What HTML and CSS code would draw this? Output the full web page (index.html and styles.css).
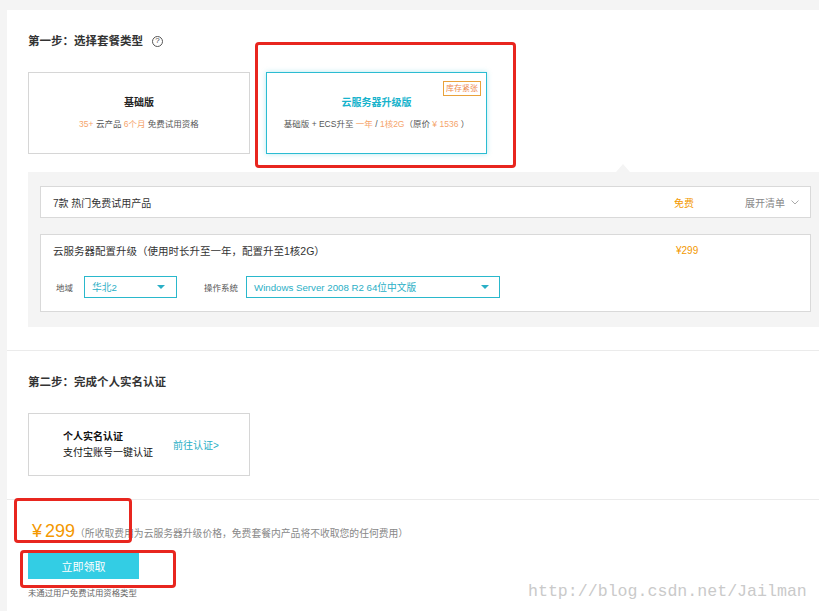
FILE: index.html
```html
<!DOCTYPE html>
<html lang="zh-CN">
<head>
<meta charset="utf-8">
<title>免费套餐</title>
<link rel="stylesheet" href="styles.css">
</head>
<body>
<div class="panel">
  <section class="step step-one">
    <h2 class="step-title">第一步：选择套餐类型 <span class="help">?</span></h2>
    <div class="cards">
      <div class="card">
        <div class="card-name">基础版</div>
        <div class="card-desc"><span class="hl">35+</span> 云产品 <span class="hl">6个月</span> 免费试用资格</div>
      </div>
      <div class="card card-active">
        <span class="badge">库存紧张</span>
        <div class="card-name teal">云服务器升级版</div>
        <div class="card-desc">基础版 + ECS升至 <span class="hl">一年</span> / <span class="hl">1核2G</span>（原价 <span class="hl">¥ 1536</span> ）</div>
      </div>
    </div>
    <div class="detail">
      <div class="box box-row">
        <div class="col-name">7款 热门免费试用产品</div>
        <div class="col-price">免费</div>
        <div class="col-toggle">展开清单 <svg class="chev" width="8" height="5" viewBox="0 0 8 5"><path d="M0.5 0.5 L4 4 L7.5 0.5" fill="none" stroke="#aaa" stroke-width="1"/></svg></div>
      </div>
      <div class="box box-config">
        <div class="config-head">
          <div class="col-name config-title">云服务器配置升级（使用时长升至一年，配置升至1核2G）</div>
          <div class="col-price price-sm">¥299</div>
          <div class="col-toggle"></div>
        </div>
        <div class="config-row">
          <span class="label">地域</span>
          <div class="select sel-region"><span>华北2</span><i class="caret"></i></div>
          <span class="label label-os">操作系统</span>
          <div class="select sel-os"><span>Windows Server 2008 R2 64位中文版</span><i class="caret"></i></div>
        </div>
      </div>
    </div>
  </section>
  <section class="step step-two">
    <h2 class="step-title">第二步：完成个人实名认证</h2>
    <div class="card auth-card">
      <div class="auth-text">
        <div class="auth-name">个人实名认证</div>
        <div class="auth-sub">支付宝账号一键认证</div>
      </div>
      <span class="auth-link">前往认证&gt;</span>
    </div>
  </section>
  <section class="step step-three">
    <div class="total"><span class="total-price"><span class="yen">¥</span>299</span><span class="total-note">（所收取费用为云服务器升级价格，免费套餐内产品将不收取您的任何费用）</span></div>
    <button class="btn">立即领取</button>
    <div class="foot-note">未通过用户免费试用资格类型</div>
  </section>
</div>
<div class="mark mark-a"></div>
<div class="mark mark-b"></div>
<div class="mark mark-c"></div>
<div class="watermark">http://blog.csdn.net/Jailman</div>
</body>
</html>
```
FILE: styles.css
```css
* { box-sizing: border-box; }
html, body { margin: 0; padding: 0; }
body {
  background: #f4f4f4;
  font-family: "Liberation Sans", "Noto Sans CJK SC", sans-serif;
  color: #333;
  width: 819px;
  height: 611px;
  overflow: hidden;
  position: relative;
}
.panel {
  margin: 10px 0 0 7px;
  background: #fff;
  height: 601px;
}
.step { padding-left: 21px; }
.step-one { padding-top: 24px; padding-bottom: 23px; }
.step-title {
  margin: 0;
  font-size: 11.5px;
  line-height: 14px;
  font-weight: bold;
  color: #333;
  display: flex;
  align-items: center;
}
.help {
  display: inline-flex;
  align-items: center;
  justify-content: center;
  width: 11px;
  height: 11px;
  border: 1px solid #555;
  border-radius: 50%;
  font-size: 8px;
  line-height: 1;
  font-weight: normal;
  margin-left: 9px;
  color: #444;
}
.cards { display: flex; gap: 16px; margin-top: 24px; }
.card {
  width: 222px;
  height: 82px;
  border: 1px solid #d6d6d6;
  background: #fff;
  display: flex;
  flex-direction: column;
  align-items: center;
  justify-content: center;
  position: relative;
}
.card-active {
  width: 221px;
  border-color: #2bbcd2;
  box-shadow: 0 0 5px rgba(43, 188, 210, 0.35);
}
.card-name { font-size: 10px; font-weight: bold; line-height: 14px; color: #222; }
.card-name.teal { color: #17b3cc; }
.card-desc { font-size: 8.5px; line-height: 12px; color: #555; margin-top: 8px; white-space: nowrap; }
.hl { color: #f5a46b; }
.badge {
  position: absolute;
  top: 8px;
  right: 5px;
  border: 1px solid #e9a23b;
  color: #ee8a4d;
  font-size: 8px;
  line-height: 13px;
  padding: 0 2px;
}
.detail {
  margin-top: 18px;
  background: #f4f4f4;
  padding: 14px 8px 15px 12px;
  position: relative;
}
.detail::before {
  content: "";
  position: absolute;
  top: -8px;
  left: 588px;
  border-left: 7px solid transparent;
  border-right: 7px solid transparent;
  border-bottom: 8px solid #f4f4f4;
}
.box { background: #fff; border: 1px solid #d9d9d9; }
.box-row { height: 32px; display: flex; align-items: center; padding: 0 11px 0 12px; font-size: 10px; }
.col-name { flex: 1; color: #333; white-space: nowrap; }
.col-price { width: 71px; color: #f39800; font-size: 10px; }
.col-toggle { width: 54px; color: #888; font-size: 10px; display: flex; align-items: center; white-space: nowrap; }
.chev { margin-left: 6px; }
.box-config { margin-top: 16px; height: 78px; padding: 8px 11px 0 12px; }
.config-head { display: flex; align-items: center; height: 14px; font-size: 10px; }
.config-title { font-size: 10.5px; }
.price-sm { font-size: 10px; padding-left: 2px; }
.config-row { display: flex; align-items: center; margin-top: 19px; padding-left: 3px; }
.label { font-size: 8.5px; color: #555; }
.label-os { margin-left: 27px; }
.select {
  height: 22px;
  border: 1px solid #2ab8cc;
  display: flex;
  align-items: center;
  justify-content: space-between;
  padding: 0 10px 0 7px;
  color: #2aafc6;
  font-size: 9.7px;
  white-space: nowrap;
  margin-left: 11px;
}
.sel-region { width: 93px; padding-right: 11px; }
.sel-os { width: 254px; margin-left: 8px; }
.caret {
  width: 0; height: 0;
  border-left: 4px solid transparent;
  border-right: 4px solid transparent;
  border-top: 4px solid #2aafc6;
}
.step-two { border-top: 1px solid #ebebeb; padding-top: 24px; padding-bottom: 23px; }
.auth-card {
  margin-top: 24px;
  height: 63px;
  flex-direction: row;
  justify-content: flex-start;
  padding-left: 34px;
}
.auth-text { font-size: 10px; line-height: 16px; color: #111; }
.auth-name { font-weight: bold; }
.auth-link { margin-left: 20px; font-size: 10px; color: #2aafc6; }
.step-three { border-top: 1px solid #ebebeb; padding-top: 19px; }
.total { display: flex; align-items: baseline; height: 24px; line-height: 24px; }
.total-price { font-size: 18px; color: #f39800; margin-left: 4px; }
.yen { margin-right: 3px; }
.total-note { font-size: 9.8px; color: #888; }
.btn {
  display: block;
  margin-top: 10px;
  width: 111px;
  height: 26px;
  border: 0;
  background: #33cde4;
  color: #fff;
  font-family: "Liberation Sans", "Noto Sans CJK SC", sans-serif;
  font-size: 11px;
  padding: 0;
}
.foot-note { margin-top: 8px; font-size: 8.4px; line-height: 12px; color: #666; }
.mark {
  position: absolute;
  border: 3px solid #e8261f;
  border-radius: 4px;
}
.mark-a { left: 255px; top: 42px; width: 261px; height: 126px; }
.mark-b { left: 14px; top: 498px; width: 118px; height: 45px; }
.mark-c { left: 20px; top: 550px; width: 156px; height: 38px; }
.watermark {
  position: absolute;
  left: 528px;
  top: 581px;
  font-family: "Liberation Mono", monospace;
  font-size: 16.6px;
  line-height: 22px;
  color: #cacaca;
  white-space: nowrap;
}
```
